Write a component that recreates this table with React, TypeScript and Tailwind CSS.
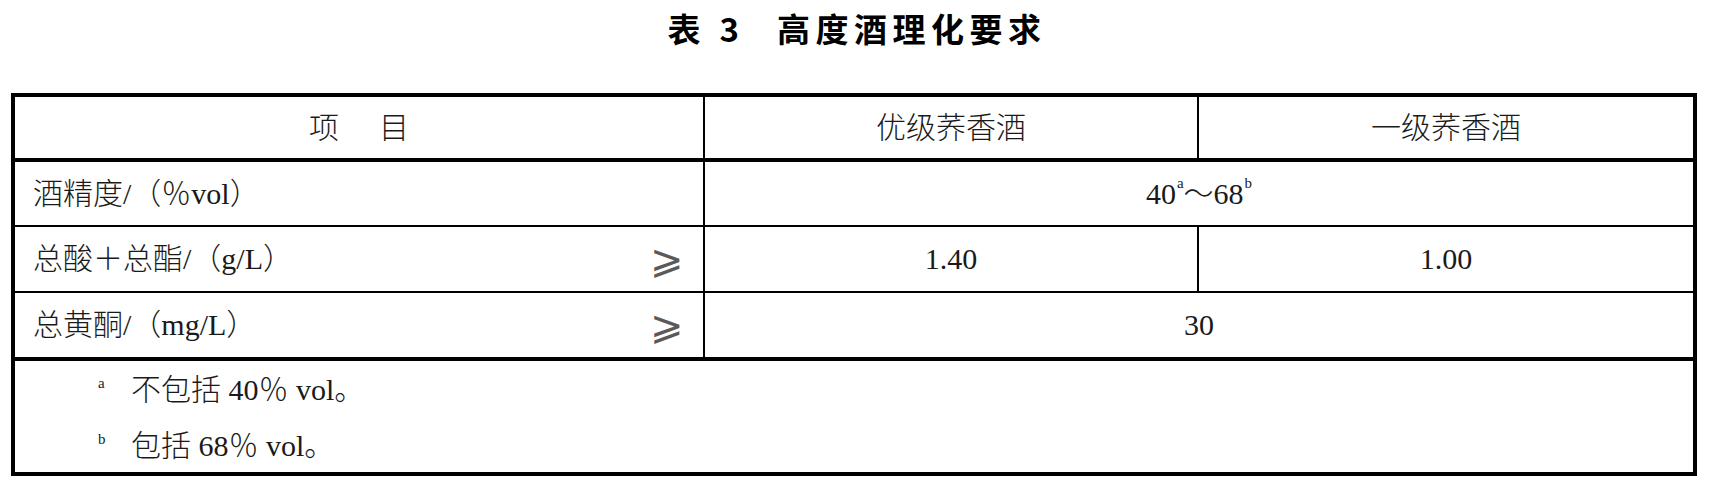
import React from "react";

const body = "font-['Liberation_Serif','Noto_Sans_CJK_SC',serif]";

function Ge() {
  return (
    <span className="font-['DejaVu_Sans',sans-serif] text-[40px] font-extralight leading-none text-[#5a5a5a]">⩾</span>
  );
}

export default function App() {
  return (
    <div className="w-[1714px] h-[498px] bg-white text-black">
      <div className="h-[93px] pt-[8px] flex justify-center font-['Noto_Sans_CJK_SC',sans-serif] font-bold text-[33px] leading-[40px]">
        <span>表</span>
        <span className="ml-[19px]">3</span>
        <span className="ml-[38px] tracking-[5.5px]">高度酒理化要求</span>
      </div>
      <div className={`ml-[11px] w-[1686px] border-4 border-black ${body} text-[30px] font-light leading-[40px] text-[#1a1a1a]`}>
        <div className="grid grid-cols-[690px_494px_494px] h-[65px] border-b-4 border-black">
          <div className="border-r-2 border-black flex items-center justify-center gap-[40px]">
            <span>项</span>
            <span>目</span>
          </div>
          <div className="border-r-2 border-black flex items-center justify-center">优级荞香酒</div>
          <div className="flex items-center justify-center">一级荞香酒</div>
        </div>
        <div className="grid grid-cols-[690px_988px] h-[65px] border-b-2 border-black">
          <div className="border-r-2 border-black flex items-center pl-[18px]">酒精度/（％vol）</div>
          <div className="flex items-center justify-center">
            <span>40</span>
            <span className="text-[15px] leading-none self-start mt-[14px] ml-[1px]">a</span>
            <span>～68</span>
            <span className="text-[15px] leading-none self-start mt-[14px] ml-[1px]">b</span>
          </div>
        </div>
        <div className="grid grid-cols-[690px_494px_494px] h-[66px] border-b-2 border-black">
          <div className="border-r-2 border-black flex items-center justify-between pl-[18px] pr-[19px]">
            <span>总酸＋总酯/（g/L）</span>
            <Ge />
          </div>
          <div className="border-r-2 border-black flex items-center justify-center">1.40</div>
          <div className="flex items-center justify-center">1.00</div>
        </div>
        <div className="grid grid-cols-[690px_988px] h-[68px] border-b-4 border-black">
          <div className="border-r-2 border-black flex items-center justify-between pl-[18px] pr-[19px]">
            <span>总黄酮/（mg/L）</span>
            <Ge />
          </div>
          <div className="flex items-center justify-center">30</div>
        </div>
        <div className="h-[111px] pt-[9px] flex flex-col gap-[16px] pl-[83px]">
          <div className="flex items-start">
            <span className="text-[15px] leading-none mt-[6px] w-[33px]">a</span>
            <span>不包括 40％ vol。</span>
          </div>
          <div className="flex items-start">
            <span className="text-[15px] leading-none mt-[6px] w-[33px]">b</span>
            <span>包括 68％ vol。</span>
          </div>
        </div>
      </div>
    </div>
  );
}
